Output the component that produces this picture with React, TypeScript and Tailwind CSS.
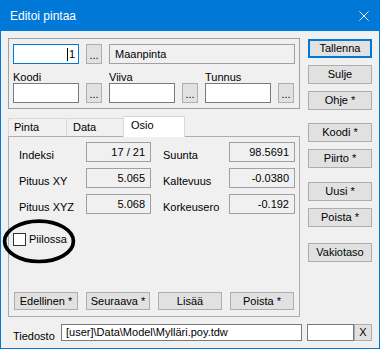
import React from "react";

const Btn = ({ children, className = "" }: { children: React.ReactNode; className?: string }) => (
  <div className={`flex items-center justify-center border border-[#adadad] bg-[#e1e1e1] ${className}`}>{children}</div>
);

const Dots = () => (
  <Btn className="w-[16px] h-[20px]">
    <span className="pt-[3px]">...</span>
  </Btn>
);

const Field = ({ label, value, lw, bw, ml = "" }: { label: string; value: string; lw: string; bw: string; ml?: string }) => (
  <>
    <div className={`${lw} ${ml} pt-[7px]`}>{label}</div>
    <div className={`${bw} h-[20px] border border-[#a0a0a0] bg-[#f0f0f0] flex items-center justify-end pr-[5px]`}>{value}</div>
  </>
);

export default function App() {
  return (
    <div className="w-[380px] h-[349px] relative bg-[#f0f0f0] border border-[#0078d7] font-['Liberation_Sans',Arial,sans-serif] text-[11px] leading-[13px] text-black overflow-hidden">
      <div className="h-[30px] bg-[#0078d7] flex items-center justify-between pl-[9px] pr-[10px] text-white text-[12px] leading-[14px]">
        <span>Editoi pintaa</span>
        <svg width="10" height="10" viewBox="0 0 10 10">
          <path d="M0.5 0.5L9.5 9.5M9.5 0.5L0.5 9.5" stroke="white" strokeWidth="1" />
        </svg>
      </div>

      <div className="pl-[7px] pt-[7px] flex gap-[8px]">
        <div className="w-[292px] flex flex-col">
          {/* group box */}
          <div className="h-[71px] border border-[#a0a0a0] pl-[4px] pt-[5px]">
            <div className="flex gap-[7px] h-[20px]">
              <div className="w-[66px] h-[20px] border border-[#0078d7] bg-white flex items-center justify-end pr-[3px]">
                <span className="w-px h-[13px] bg-black mr-[1px]" />
                <span>1</span>
              </div>
              <Dots />
              <div className="w-[186px] h-[20px] border border-[#a0a0a0] bg-[#f0f0f0] flex items-center pl-[5px]">Maanpinta</div>
            </div>
            <div className="flex gap-[7px] mt-[7px]">
              {["Koodi", "Viiva", "Tunnus"].map((l) => (
                <div key={l} className="w-[89px] flex flex-col">
                  <div className="h-[12px] leading-[12px]">{l}</div>
                  <div className="flex gap-[7px] h-[20px]">
                    <div className="w-[66px] h-[20px] border border-[#7a7a7a] bg-white" />
                    <Dots />
                  </div>
                </div>
              ))}
            </div>
          </div>

          {/* tabs */}
          <div className="mt-[7px] h-[20px] flex items-end relative z-10">
            <div className="w-[58px] h-[18px] border-l border-t border-[#d9d9d9] pl-[5px] pt-[2px]">Pinta</div>
            <div className="w-[57px] h-[18px] border-l border-t border-[#d9d9d9] pl-[6px] pt-[2px]">Data</div>
            <div className="w-[62px] h-[21px] -mb-px border-l border-t border-r border-[#d9d9d9] bg-white pl-[7px] pt-[2px]">Osio</div>
          </div>
          <div className="h-[181px] border border-[#adadad] flex flex-col">
            <div className="flex flex-col gap-[6px] pt-[5px] pl-[10px]">
              <div className="flex h-[20px]">
                <Field label="Indeksi" value="17 / 21" lw="w-[67px]" bw="w-[65px]" />
                <Field label="Suunta" value="98.5691" lw="w-[66px]" bw="w-[66px]" ml="ml-[12px]" />
              </div>
              <div className="flex h-[20px]">
                <Field label="Pituus XY" value="5.065" lw="w-[67px]" bw="w-[65px]" />
                <Field label="Kaltevuus" value="-0.0380" lw="w-[66px]" bw="w-[66px]" ml="ml-[12px]" />
              </div>
              <div className="flex h-[20px]">
                <Field label="Pituus XYZ" value="5.068" lw="w-[67px]" bw="w-[65px]" />
                <Field label="Korkeusero" value="-0.192" lw="w-[66px]" bw="w-[66px]" ml="ml-[12px]" />
              </div>
            </div>
            <div className="mt-[19px] pl-[4px] flex items-center">
              <div className="w-[13px] h-[13px] border border-[#333333] bg-white" />
              <span className="ml-[3px]">Piilossa</span>
            </div>
            <div className="mt-auto pb-[6px] pl-[5px] flex gap-[8px]">
              <Btn className="w-[64px] h-[18px]">Edellinen *</Btn>
              <Btn className="w-[64px] h-[18px]">Seuraava *</Btn>
              <Btn className="w-[64px] h-[18px]">Lisää</Btn>
              <Btn className="w-[64px] h-[18px]">Poista *</Btn>
            </div>
          </div>
        </div>

        <div className="w-[64px] flex flex-col">
          <div className="mt-[1px] h-[19px] border-2 border-[#0078d7] bg-[#e1e1e1] flex items-center justify-center">Tallenna</div>
          <Btn className="mt-[7px] h-[19px]">Sulje</Btn>
          <Btn className="mt-[7px] h-[19px]">Ohje *</Btn>
          <Btn className="mt-[13px] h-[19px]">Koodi *</Btn>
          <Btn className="mt-[7px] h-[19px]">Piirto *</Btn>
          <Btn className="mt-[14px] h-[19px]">Uusi *</Btn>
          <Btn className="mt-[7px] h-[19px]">Poista *</Btn>
          <Btn className="mt-[16px] h-[19px]">Vakiotaso</Btn>
        </div>
      </div>

      <div className="mt-[7px] pl-[12px] flex h-[17px]">
        <div className="w-[48px] pt-[6px]">Tiedosto</div>
        <div className="w-[241px] h-[17px] border border-[#7a7a7a] bg-white flex items-center pl-[4px]">[user]\Data\Model\Mylläri.poy.tdw</div>
        <div className="ml-[5px] w-[47px] h-[17px] border border-[#7a7a7a] bg-white" />
        <Btn className="w-[18px] h-[17px]">X</Btn>
      </div>

      <svg className="absolute left-[-1px] top-[-1px] pointer-events-none" width="380" height="349">
        <ellipse cx="39" cy="241.3" rx="34.4" ry="20.2" fill="none" stroke="black" strokeWidth="3.7" />
      </svg>
    </div>
  );
}
